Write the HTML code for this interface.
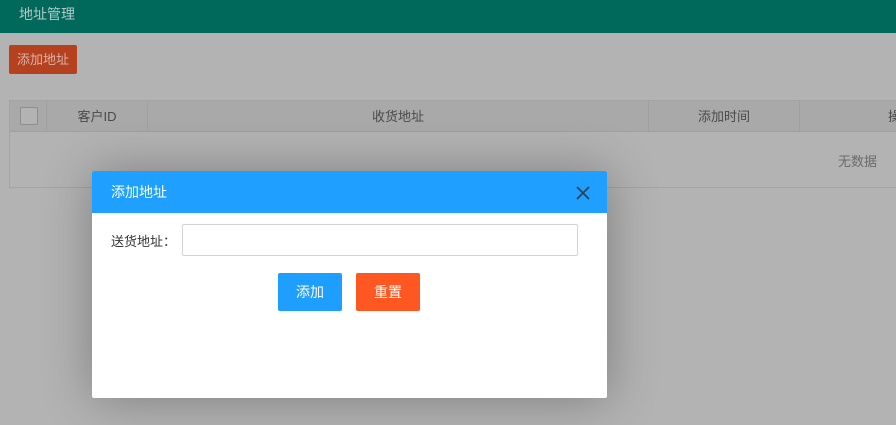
<!DOCTYPE html>
<html><head><meta charset="utf-8"><style>
*{margin:0;padding:0;box-sizing:border-box}
body{width:896px;height:425px;overflow:hidden;background:#b3b3b3;font-family:"Liberation Sans","Noto Sans CJK SC",sans-serif;font-size:13px;position:relative}
.hd{position:absolute;left:0;top:0;width:896px;height:33px;background:#00695c;color:#b3c9c6;font-size:14px;line-height:28px;padding-left:19px}
.abtn{position:absolute;left:9px;top:45px;width:68px;height:29px;background:#b5411f;color:#d9b3a8;border-radius:2px;line-height:29px;text-align:center;font-size:13px}
.tbl{position:absolute;left:9px;top:100px;width:900px;height:88px;border:1px solid #a4a4a4;background:#b3b3b3}
.th{position:absolute;top:0;height:31px;border-right:1px solid #a0a0a0;background:#a9a9a9;line-height:31px;text-align:center;color:#4a4a4a;border-bottom:1px solid #a0a0a0;white-space:nowrap;overflow:hidden}
.cb{position:absolute;left:10px;top:6px;width:18px;height:18px;border:1px solid #8e8e8e;background:#b3b3b3;border-radius:2px}
.nd{position:absolute;left:828px;top:50px;color:#6b6b6b;font-size:13px}
.dlg{position:absolute;left:92px;top:171px;width:515px;height:227px;background:#fff;border-radius:2px;box-shadow:1px 1px 50px rgba(0,0,0,.3)}
.dt{height:42px;background:#1f9fff;color:#fff;font-size:14px;line-height:42px;padding-left:19px;border-radius:2px 2px 0 0;position:relative}
.lbl{position:absolute;left:19px;top:60px;color:#333;font-size:13px}
.inp{position:absolute;left:90px;top:53px;width:396px;height:32px;border:1px solid #d2d2d2;border-radius:2px}
.b{position:absolute;top:102px;width:64px;height:38px;line-height:38px;text-align:center;color:#fff;font-size:14px;border-radius:2px}
</style></head><body>
<div class="hd">地址管理</div>
<div class="abtn">添加地址</div>
<div class="tbl">
<div class="th" style="left:0;width:37px"><div class="cb"></div></div>
<div class="th" style="left:37px;width:101px">客户ID</div>
<div class="th" style="left:138px;width:501px">收货地址</div>
<div class="th" style="left:639px;width:151px">添加时间</div>
<div class="th" style="left:790px;width:110px;text-align:left;padding-left:88px">操作</div>
<div class="nd">无数据</div>
</div>
<div class="dlg">
<div class="dt">添加地址
<svg style="position:absolute;left:484px;top:15px" width="14" height="14" viewBox="0 0 14 14"><path d="M1 1L13 13M13 1L1 13" stroke="#2b3f55" stroke-width="1.6"/></svg></div>
<div class="lbl">送货地址：</div>
<div class="inp"></div>
<div class="b" style="left:186px;background:#1e9fff">添加</div>
<div class="b" style="left:264px;background:#ff5722">重置</div>
</div>
</body></html>
